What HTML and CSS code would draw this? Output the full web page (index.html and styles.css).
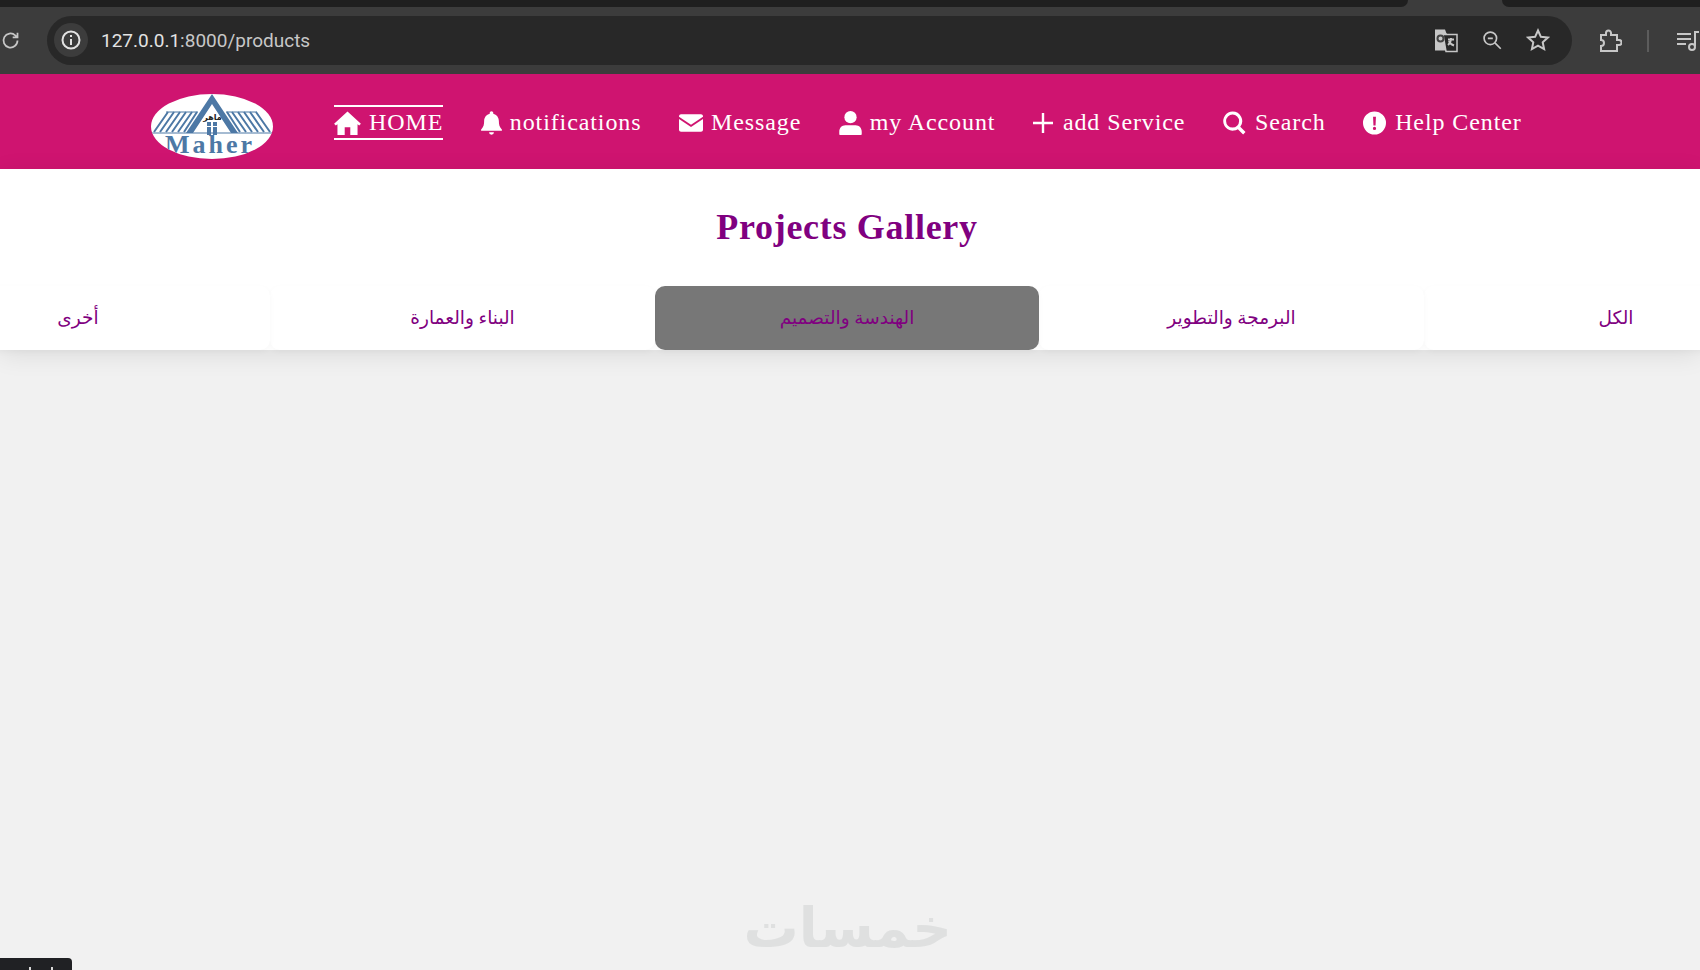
FILE: index.html
```html
<!DOCTYPE html>
<html lang="en">
<head>
  <meta charset="UTF-8" />
  <title>Projects Gallery</title>
  <link rel="stylesheet" href="styles.css">
</head>
<body>
  <div class="tabstrip">
    <span class="strip-tab strip-tab-left"></span>
    <span class="strip-tab strip-tab-right"></span>
  </div>

  <div class="toolbar">
    <svg class="tool-icon reload" viewBox="0 0 24 24"><path d="M20 12a8 8 0 1 1-2.600-5.900L20 8.500M20 3v5.500h-5.500"/></svg>
    <div class="address">
      <span class="site-info">
        <svg viewBox="0 0 24 24"><circle cx="12" cy="12" r="8.500"/><path d="M12 11v6M12 7v2"/></svg>
      </span>
      <span class="url">127.0.0.1<span class="url-rest">:8000/products</span></span>
      <span class="address-icons">
        <svg class="translate" viewBox="0 0 24 24">
          <path class="translate-back" d="M1 1h10l1.500 4H13l3 17H1z"/>
          <path class="translate-front" d="M9 6h14v17H12z"/>
          <circle class="translate-g" cx="6.500" cy="10" r="3"/>
          <path d="M14 11h6M17 9.500c0 3.500-1 5.500-3 7M15 12.500c.5 2 2.500 3.500 5 4.500"/>
        </svg>
        <svg class="lens" viewBox="0 0 24 24"><circle cx="10" cy="10" r="7.500"/><path d="M15.500 15.500l7 7M7 10h6"/></svg>
        <svg class="star" viewBox="0 0 24 24"><path d="M12 2.500l2.900 6.300 6.900.8-5.100 4.700 1.400 6.800-6.100-3.400-6.100 3.400 1.400-6.800L2.200 9.600l6.900-.8z"/></svg>
      </span>
    </div>
    <svg class="tool-icon puzzle" viewBox="0 0 24 24"><path d="M3 6h5V4a2.500 2.500 0 0 1 5 0v2h6v5h2a2.500 2.500 0 0 1 0 5h-2v6H3v-5a3 3 0 0 0 0-6z"/></svg>
    <span class="divider"></span>
    <svg class="tool-icon media" viewBox="0 0 24 24"><path d="M1 5h14M1 10h14M1 15h9M19 17V3h4"/><circle cx="16" cy="18" r="3"/></svg>
  </div>

  <header class="site-header">
    <svg class="logo" viewBox="0 0 122 65">
      <defs><clipPath id="logoClip"><ellipse cx="61" cy="32.500" rx="61" ry="32.500"/></clipPath></defs>
      <ellipse cx="61" cy="32.500" rx="61" ry="32.500" fill="#fff"/>
      <g clip-path="url(#logoClip)">
        <g stroke="#4d78a5" stroke-width="2" fill="none">
          <path d="M17 18L3 38M23 18L9 38M29 18L15 38M35 18L21 38M41 18L27 38M46 18L33 38"/>
          <path d="M76 18l13 20M81 18l14 20M87 18l14 20M93 18l14 20M99 18l14 20M105 18l14 20"/>
          <path d="M15 18h32M75 18h31" stroke-width="1"/>
          <path d="M1 39h120" stroke-width="1.200"/>
        </g>
        <path d="M61 0L35 39h7L61 10l19 29h7z" fill="#4d78a5"/>
        <path d="M56 28h4v4h-4zM62 28h4v4h-4zM56 33h4v8h-4zM62 33h4v8h-4z" fill="#4d78a5"/>
        <text class="logo-ar" x="61.500" y="26">ماهر</text>
        <text class="logo-name" x="14" y="59" textLength="87">Maher</text>
      </g>
    </svg>

    <nav class="main-nav">
      <a class="nav-link active">
        <svg viewBox="0 1.500 24 21.500" class="nav-icon icon-home"><path d="M12 2L0 13l1.500 1.600L3 13.300V23h6.500v-7h5v7H21v-9.700l1.500 1.300L24 13z"/></svg>
        HOME
      </a>
      <a class="nav-link">
        <svg viewBox="1.300 0 21.400 24" class="nav-icon icon-bell"><path d="M12 0c-1 0-1.800.8-1.800 1.800v.7C6.800 3.300 4.500 6.300 4.500 10c0 4-.6 6-3 8.500-.5.600-.1 1.500.7 1.500h19.600c.8 0 1.200-.9.7-1.500-2.400-2.500-3-4.500-3-8.500 0-3.700-2.300-6.700-5.700-7.500v-.7C13.800.8 13 0 12 0zM9.500 21.500a2.500 2.500 0 0 0 5 0z"/></svg>
        notifications
      </a>
      <a class="nav-link">
        <svg viewBox="0 3.500 24 17.500" class="nav-icon icon-mail"><path d="M2 3.500h20c1 0 2 .8 2 2v.5l-12 8L0 6v-.5c0-1.200 1-2 2-2zM0 8.300l12 8 12-8V19c0 1.200-1 2-2 2H2c-1 0-2-.8-2-2z"/></svg>
        Message
      </a>
      <a class="nav-link">
        <svg viewBox="1 .5 22 23.500" class="nav-icon icon-user"><circle cx="12" cy="6.500" r="6"/><path d="M7 14.500h10c3.500 0 6 2.800 6 6.200V23c0 .6-.4 1-1 1H2c-.6 0-1-.4-1-1v-2.300c0-3.400 2.500-6.200 6-6.200z"/></svg>
        my Account
      </a>
      <a class="nav-link">
        <svg viewBox="2 2 20 20" class="nav-icon icon-plus"><path d="M10.800 2h2.400v8.800H22v2.400h-8.800V22h-2.400v-8.800H2v-2.400h8.800z"/></svg>
        add Service
      </a>
      <a class="nav-link">
        <svg viewBox="0 0 24 24" class="nav-icon icon-round"><path fill-rule="evenodd" d="M10 0a10 10 0 0 1 8 16l5.500 5.500-2.500 2.500-5.500-5.500A10 10 0 1 1 10 0zm0 3.200a6.800 6.800 0 1 0 0 13.600 6.800 6.800 0 0 0 0-13.600z"/></svg>
        Search
      </a>
      <a class="nav-link">
        <svg viewBox="0 0 24 24" class="nav-icon icon-round"><path fill-rule="evenodd" d="M12 0a12 12 0 1 1 0 24 12 12 0 0 1 0-24zm-1.500 5.500l.4 9h2.200l.4-9zM12 16a1.700 1.700 0 1 0 0 3.400 1.700 1.700 0 0 0 0-3.400z"/></svg>
        Help Center
      </a>
    </nav>
  </header>

  <main class="page">
    <section class="gallery-head">
      <h1 class="gallery-title">Projects Gallery</h1>
      <div class="filter-row" dir="rtl">
        <button class="filter-tab">الكل</button>
        <button class="filter-tab">البرمجة والتطوير</button>
        <button class="filter-tab selected">الهندسة والتصميم</button>
        <button class="filter-tab">البناء والعمارة</button>
        <button class="filter-tab">أخرى</button>
      </div>
    </section>
  </main>

  <div class="watermark" dir="rtl">خمسات</div>
  <div class="corner-tip"><span class="tip-mark"></span><span class="tip-mark"></span></div>
</body>
</html>
```

FILE: styles.css
```css
html, body {
  margin: 0;
  padding: 0;
  overflow: hidden;
  width: 100%;
  height: 100%;
  background: #f1f1f1;
  font-family: 'Liberation Serif', 'Times New Roman', serif;
}

/* browser chrome */
.tabstrip {
  height: 7px;
  background: #3c3c3c;
  display: flex;
  justify-content: space-between;
}

.strip-tab {
  height: 7px;
  background: #1f1f1f;
}

.strip-tab-left {
  width: 1408px;
  border-bottom-right-radius: 7px;
}

.strip-tab-right {
  width: 198px;
  border-bottom-left-radius: 7px;
}

.toolbar {
  height: 67px;
  background: #3c3c3c;
  display: flex;
  align-items: center;
}

.tool-icon {
  fill: none;
  stroke: #c7c7c7;
  stroke-width: 2;
  flex: none;
}

.reload {
  width: 21px;
  height: 21px;
  margin-right: 26px;
}

.address {
  width: 1526px;
  height: 49px;
  margin-top: -1px;
  border-radius: 25px;
  background: #282828;
  display: flex;
  align-items: center;
  box-sizing: border-box;
  padding: 0 22px 0 7px;
}

.site-info {
  width: 34px;
  height: 34px;
  border-radius: 50%;
  background: #3c3c3c;
  display: flex;
  align-items: center;
  justify-content: center;
}

.site-info svg {
  width: 24px;
  height: 24px;
  fill: none;
  stroke: #e3e3e3;
  stroke-width: 2;
}

.url {
  margin-left: 13px;
  font-family: Roboto, 'Noto Sans', sans-serif;
  font-size: 19px;
  color: #e3e3e3;
}

.url-rest {
  color: #c7c7c7;
}

.address-icons {
  margin-left: auto;
  display: flex;
  align-items: center;
  gap: 24px;
}

.address-icons svg {
  fill: none;
  stroke: #c7c7c7;
  stroke-width: 2;
}

.translate { width: 24px; height: 25px; }
.address-icons .translate-back { fill: #c7c7c7; stroke: none; }
.address-icons .translate-front { fill: #282828; stroke-width: 1.500; }
.address-icons .translate-g { stroke: #444; }
.lens { width: 20px; height: 20px; }
.star { width: 24px; height: 24px; }

.puzzle {
  width: 24px;
  height: 24px;
  margin-left: 26px;
}

.divider {
  width: 2px;
  height: 22px;
  margin-left: 25px;
  background: #5c5c5c;
  flex: none;
}

.media {
  width: 24px;
  height: 24px;
  margin-left: 27px;
}

/* site header */
.site-header {
  height: 95px;
  background: #cf1470;
  display: flex;
  align-items: center;
  box-sizing: border-box;
  padding: 0 0 0 151px;
}

.logo {
  width: 122px;
  height: 65px;
  flex: none;
  margin-top: 10px;
}

.logo-name {
  font-family: 'Liberation Serif', serif;
  font-weight: bold;
  font-size: 26px;
  fill: #4d78a5;
}

.logo-ar {
  font-family: 'DejaVu Sans', sans-serif;
  font-weight: bold;
  font-size: 8px;
  fill: #222;
  text-anchor: middle;
}

.main-nav {
  display: flex;
  align-items: center;
  gap: 37.500px;
  margin-left: 61px;
  margin-top: 2px;
}

.nav-link {
  display: flex;
  align-items: center;
  gap: 8px;
  color: #fff;
  font-size: 24px;
  letter-spacing: 0.9px;
  white-space: nowrap;
  line-height: 31px;
  border-top: 2px solid transparent;
  border-bottom: 2px solid transparent;
}

.nav-link.active {
  border-color: #fff;
}

.nav-icon {
  width: 24px;
  height: 24px;
  fill: #fff;
  flex: none;
}

.icon-home { width: 27px; height: 24px; }
.icon-bell { width: 21px; height: 24px; }
.icon-mail { width: 24px; height: 18px; }
.icon-user { width: 23px; height: 24px; }
.icon-plus { width: 20px; height: 20px; margin-right: 2px; }
.icon-round { width: 23px; height: 24px; margin-right: 1px; }

/* gallery */
.gallery-head {
  background: #fff;
  padding-right: 6px;
  box-shadow: 0 5px 24px rgba(0, 0, 0, 0.09);
}

.gallery-title {
  margin: 0;
  padding: 36px 0 36px;
  text-align: center;
  color: #800080;
  font-size: 36px;
  line-height: 45px;
  letter-spacing: 0.7px;
}

.filter-row {
  display: flex;
  justify-content: center;
}

.filter-tab {
  flex: none;
  width: 384.500px;
  height: 64px;
  border: none;
  border-radius: 10px;
  background: #fff;
  color: #800080;
  font-family: 'Liberation Serif', 'DejaVu Sans', serif;
  font-size: 18.500px;
  box-shadow: 0 2px 6px rgba(0, 0, 0, 0.03);
}

.filter-tab.selected {
  background: #777;
}

/* overlays */
.watermark {
  position: absolute;
  left: 748px;
  top: 898px;
  width: 204px;
  text-align: center;
  font-family: 'DejaVu Sans', sans-serif;
  font-weight: bold;
  font-size: 55px;
  line-height: 60px;
  color: #dfe0e0;
}

.corner-tip {
  position: absolute;
  left: 0;
  bottom: 0;
  width: 72px;
  height: 12px;
  box-sizing: border-box;
  padding: 9px 0 0 29px;
  display: flex;
  gap: 20px;
  border-top-right-radius: 4px;
  background: #202124;
}

.tip-mark {
  width: 2px;
  height: 3px;
  background: #d8d8d8;
}
```
